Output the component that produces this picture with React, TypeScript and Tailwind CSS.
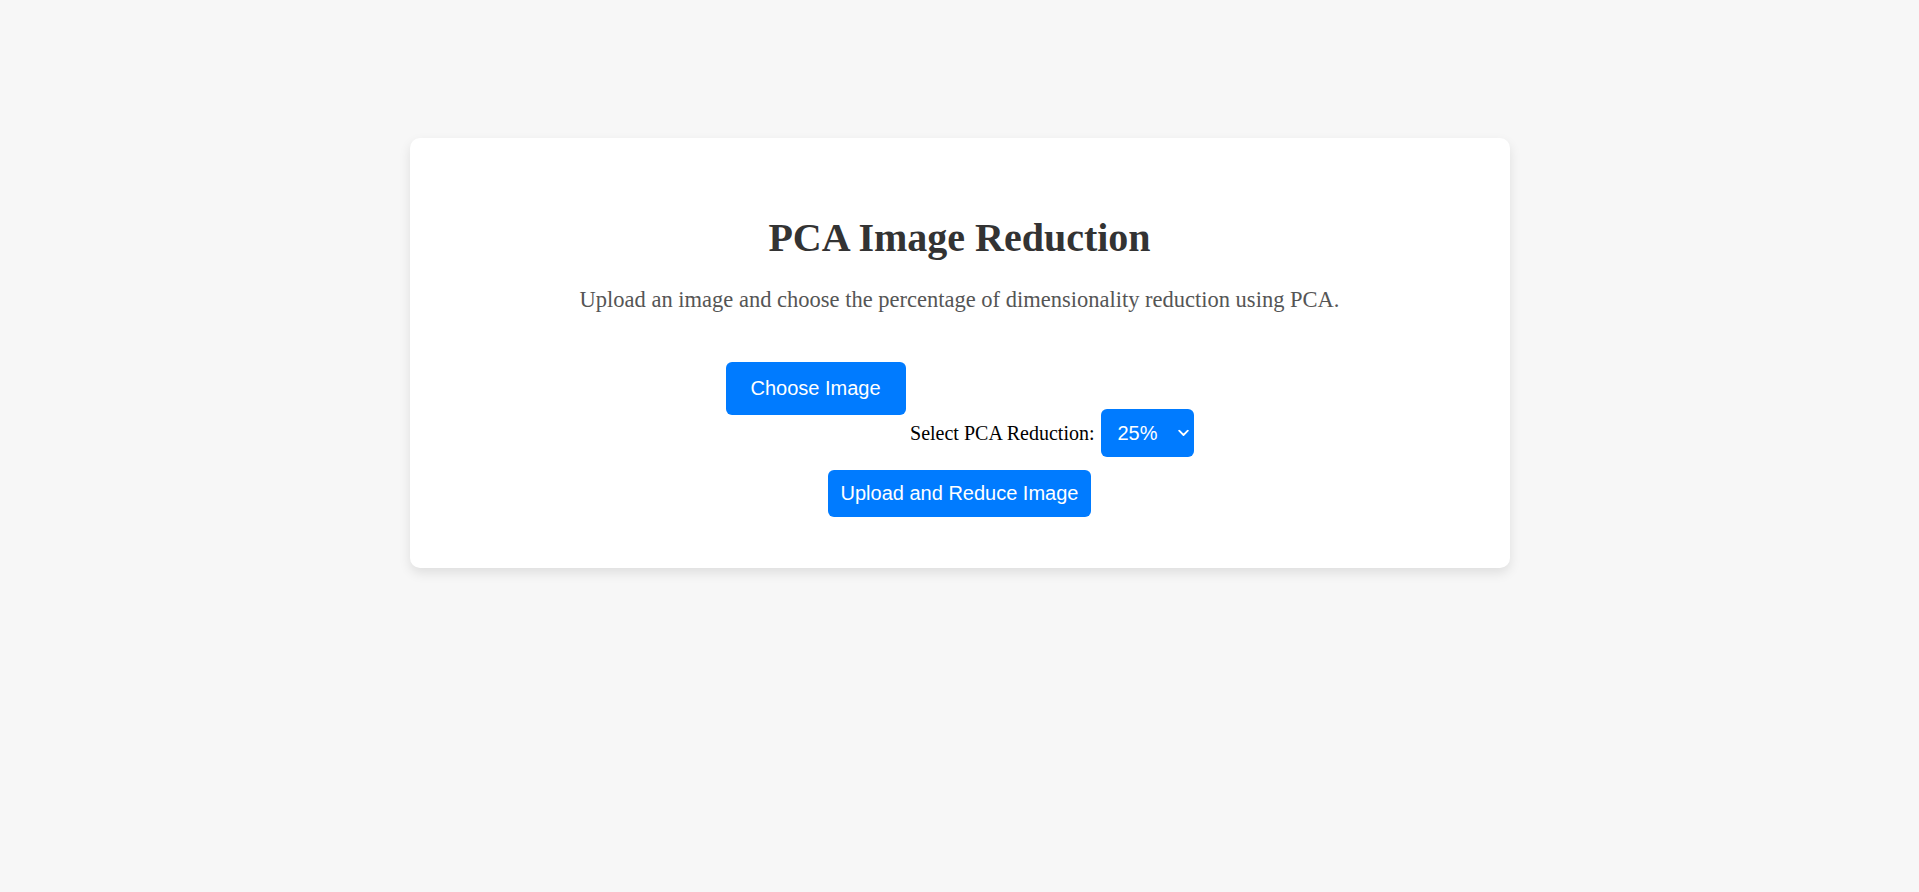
import { useState } from "react";

export default function App() {
  const [reduction, setReduction] = useState("25");

  return (
    <div className="min-h-screen w-full bg-[#f7f7f7] pt-[138px] font-['Liberation_Serif',serif]">
      <div className="mx-auto w-[1100px] rounded-[10px] bg-white pt-[78px] pb-[51px] text-center shadow-[0_5px_12px_rgba(0,0,0,0.1)]">
        <h1 className="m-0 text-[40px] leading-[44px] font-bold text-[#333]">PCA Image Reduction</h1>
        <p className="mt-[27px] text-[22.5px] leading-[25px] text-[#555]">
          Upload an image and choose the percentage of dimensionality reduction using PCA.
        </p>

        <form className="mx-auto mt-[50px] flex w-[468px] flex-col" onSubmit={(e) => e.preventDefault()}>
          {/* file picker, shown as a button */}
          <label className="self-start cursor-pointer rounded-[6px] bg-[#007bff] px-[25px] py-[15px] font-['Liberation_Sans',Arial,sans-serif] text-[20px] leading-[23px] text-white">
            Choose Image
            <input type="file" accept="image/*" className="hidden" />
          </label>

          {/* reduction select */}
          <div className="-mt-[6px] flex items-center gap-[6px] self-end">
            <span className="text-[20px] leading-[23px] text-black">Select PCA Reduction:</span>
            <div className="relative">
              <select
                value={reduction}
                onChange={(e) => setReduction(e.target.value)}
                className="block h-[48px] w-[93px] cursor-pointer appearance-none rounded-[6px] bg-[#007bff] pl-[17px] font-['Liberation_Sans',Arial,sans-serif] text-[20px] text-white outline-none"
              >
                <option value="10">10%</option>
                <option value="25">25%</option>
                <option value="50">50%</option>
                <option value="75">75%</option>
              </select>
              <svg
                className="pointer-events-none absolute top-1/2 right-[5px] -translate-y-1/2"
                width="11"
                height="7"
                viewBox="0 0 11 7"
                fill="none"
              >
                <path d="M1.2 1.2l4.3 4.3 4.3-4.3" stroke="white" strokeWidth="1.8" strokeLinecap="round" strokeLinejoin="round" />
              </svg>
            </div>
          </div>

          <button
            type="submit"
            className="mt-[13px] self-center cursor-pointer rounded-[6px] bg-[#007bff] px-[12.5px] py-[12px] font-['Liberation_Sans',Arial,sans-serif] text-[20px] leading-[23px] text-white"
          >
            Upload and Reduce Image
          </button>
        </form>
      </div>
    </div>
  );
}
